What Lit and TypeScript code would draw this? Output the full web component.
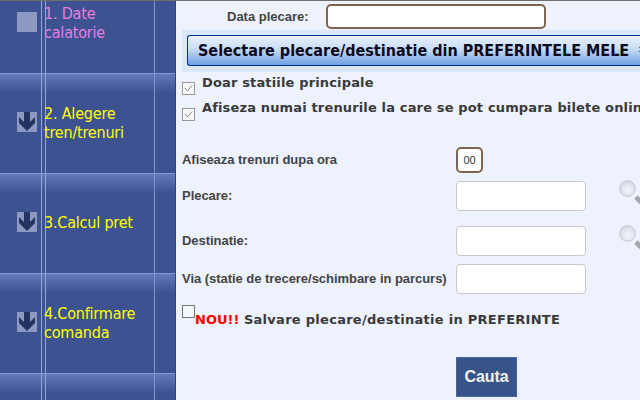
import { LitElement, html, css } from "lit";
import { customElement } from "lit/decorators.js";

const steps = [
  { label: "1. Date\ncalatorie", cls: "pink", icon: "blank", h: 72, iconTop: 11, textTop: 3, first: true },
  { label: "2. Alegere\ntren/trenuri", cls: "yellow", icon: "arrow", h: 100, iconTop: 38, textTop: 30, first: false },
  { label: "3.Calcul pret", cls: "yellow", icon: "arrow", h: 100, iconTop: 38, textTop: 39, first: false },
  { label: "4.Confirmare\ncomanda", cls: "yellow", icon: "arrow", h: 100, iconTop: 38, textTop: 30, first: false },
  { label: "", cls: "", icon: "", h: 27, iconTop: 0, textTop: 0, first: false },
];

const lens = html`<svg class="lens" width="24" height="30" viewBox="0 0 24 30">
  <defs><radialGradient id="g" cx="0.55" cy="0.6" r="0.6"><stop offset="0" stop-color="#f4f6fb"/><stop offset="1" stop-color="#d5d9e4"/></radialGradient></defs>
  <circle cx="8.5" cy="8.5" r="7.8" fill="url(#g)" stroke="#c3c7d0" stroke-width="1"/>
  <path d="M17 17l8 8" stroke="#a3a6ae" stroke-width="5"/>
</svg>`;

const tick = html`<svg width="11" height="11" viewBox="0 0 11 11"><path d="M2 5l2.5 3L9 2.5" fill="none" stroke="#8a8a8a"/></svg>`;

@customElement("app-root")
export class AppRoot extends LitElement {
  static styles = css`
    :host { display: block; width: 640px; height: 400px; overflow: hidden; background: #eef2fc; font-family: "Liberation Sans", Arial, sans-serif; }
    .page { display: flex; height: 399px; border-top: 1px solid #6f6f6f; overflow: hidden; }
    .side { width: 175px; flex: none; background: #3d5291; border-right: 1px solid #2f4280; display: flex; flex-direction: column; }
    .row { flex: none; display: flex; box-sizing: border-box; border-top: 1px solid #8599d4; background: linear-gradient(#6379b9, #3d5291 19px); }
    .row.first { border-top: none; background: #3d5291; }
    .c1 { width: 41px; flex: none; border-right: 1px solid #93a6dc; }
    .c2 { width: 3px; flex: none; border-right: 1px solid #93a6dc; }
    .c3 { width: 108px; flex: none; border-right: 1px solid #7f93cd; }
    .c4 { flex: 1; }
    .ico { margin-left: 17px; width: 20px; height: 20px; background: #8c9ac2; }
    .ico svg { display: block; }
    .txt { margin-left: -2px; font: 16px/19px "DejaVu Sans Condensed", "DejaVu Sans", Tahoma, sans-serif; white-space: pre-line; letter-spacing: -0.2px; }
    .pink { color: #e77ee0; }
    .yellow { color: #ffff00; }
    .main { flex: 1; min-width: 0; display: flex; flex-direction: column; padding-top: 3px; color: #3a3a3a; overflow: hidden; }
    .date { display: flex; align-items: center; height: 25px; padding-left: 51px; gap: 17px; font-size: 13px; font-weight: bold; color: #444; }
    .date .in { width: 220px; height: 25px; box-sizing: border-box; border: 2px solid #7d6450; border-radius: 5px; background: #fff; flex: none; }
    .band { margin: 1px 0 0 6px; background: #dbe7f8; padding: 5px 0 6px 5px; white-space: nowrap; }
    .sel { height: 31px; width: 470px; box-sizing: border-box; border: 1px solid #003399; border-right: none; border-radius: 3px 0 0 3px; background: linear-gradient(#e9f1fc, #c8dbf5 45%, #6e9fe0); display: flex; align-items: center; gap: 9px; padding-left: 10px; font: bold 16px "DejaVu Sans Condensed", "DejaVu Sans", Tahoma, sans-serif; color: #0a0a1e; overflow: hidden; }
    .sel svg { flex: none; }
    .checks { padding: 3px 0 0 6px; display: flex; flex-direction: column; gap: 3px; }
    .chk { display: flex; gap: 7px; height: 22px; white-space: nowrap; font: bold 13px/15px "DejaVu Sans", Verdana, sans-serif; letter-spacing: 0.15px; }
    .box { flex: none; width: 13px; height: 13px; box-sizing: border-box; border: 1px solid #999; background: #f8f8f8; margin-top: 7px; }
    .box svg { display: block; }
    .chk + .chk .box { margin-top: 8px; }
    .form { margin: 25px 0 0 6px; display: grid; grid-template-columns: 274px 130px 24px; font-size: 13px; font-weight: bold; color: #444; white-space: nowrap; letter-spacing: -0.04px; }
    .form .l { display: flex; align-items: center; height: 28px; padding-bottom: 2px; }
    .form .l.top { height: 24px; }
    .hour { width: 27px; height: 26px; box-sizing: border-box; border: 2px solid #7d6450; border-radius: 5px; background: #fff; font-weight: normal; font-size: 11px; color: #333; display: flex; align-items: center; justify-content: center; margin-bottom: 8px; }
    .field { height: 30px; box-sizing: border-box; border: 1px solid #c8c8c8; border-radius: 4px; background: #fff; }
    .lens { margin: -1px 0 0 33px; display: block; overflow: visible; }
    .gap1 { grid-column: 1 / -1; height: 15px; }
    .gap2 { grid-column: 1 / -1; height: 8px; }
    .new { margin: 11px 0 0 6px; display: flex; white-space: nowrap; font: bold 13px/15px "DejaVu Sans", Verdana, sans-serif; }
    .new .box { margin: 0; background: #f4f6fb; border-color: #777; }
    .new .t { margin-top: 7px; }
    .new .rest { letter-spacing: 0.28px; }
    .nou { color: #f00; }
    .btn { margin: 30px 0 0 280px; width: 61px; height: 40px; box-sizing: border-box; background: #36548a; border: 1px solid #4f6691; color: #f2eee6; font: bold 16px "Liberation Sans", Arial, sans-serif; display: flex; align-items: center; justify-content: center; letter-spacing: -0.1px; }
  `;
  render() {
    return html`<div class="page">
      <div class="side">
        ${steps.map(s => html`<div class="row ${s.first ? "first" : ""}" style="height:${s.h}px">
          <div class="c1" style="padding-top:${s.iconTop}px">${s.icon ? html`<div class="ico">${s.icon === "arrow" ? html`<svg width="20" height="20" viewBox="0 0 20 20"><path d="M7 0h6v10l5-5v6l-8 8-8-8V5l5 5z" fill="#25335f"/></svg>` : ""}</div>` : ""}</div>
          <div class="c2"></div>
          <div class="c3" style="padding-top:${s.textTop}px">${s.label ? html`<div class="txt ${s.cls}">${s.label}</div>` : ""}</div>
          <div class="c4"></div>
        </div>`)}
      </div>
      <div class="main">
        <div class="date"><span>Data plecare:</span><div class="in"></div></div>
        <div class="band"><div class="sel"><span>Selectare plecare/destinatie din PREFERINTELE MELE</span>
          <svg width="10" height="10" viewBox="0 0 10 10"><path d="M1 1l4 3 4-3M1 5l4 3 4-3" fill="none" stroke="#777" stroke-width="1.2"/></svg></div></div>
        <div class="checks">
          <div class="chk"><div class="box">${tick}</div><span>Doar statiile principale</span></div>
          <div class="chk"><div class="box">${tick}</div><span>Afiseza numai trenurile la care se pot cumpara bilete online</span></div>
        </div>
        <div class="form">
          <div class="l top">Afiseaza trenuri dupa ora</div><div><div class="hour">00</div></div><div></div>
          <div class="l">Plecare:</div><div class="field"></div><div>${lens}</div>
          <div class="gap1"></div>
          <div class="l">Destinatie:</div><div class="field"></div><div>${lens}</div>
          <div class="gap2"></div>
          <div class="l">Via (statie de trecere/schimbare in parcurs)</div><div class="field"></div><div></div>
        </div>
        <div class="new"><div class="box"></div><div class="t"><span class="nou">NOU!!</span> <span class="rest">Salvare plecare/destinatie in PREFERINTE</span></div></div>
        <div class="btn">Cauta</div>
      </div>
    </div>`;
  }
}
